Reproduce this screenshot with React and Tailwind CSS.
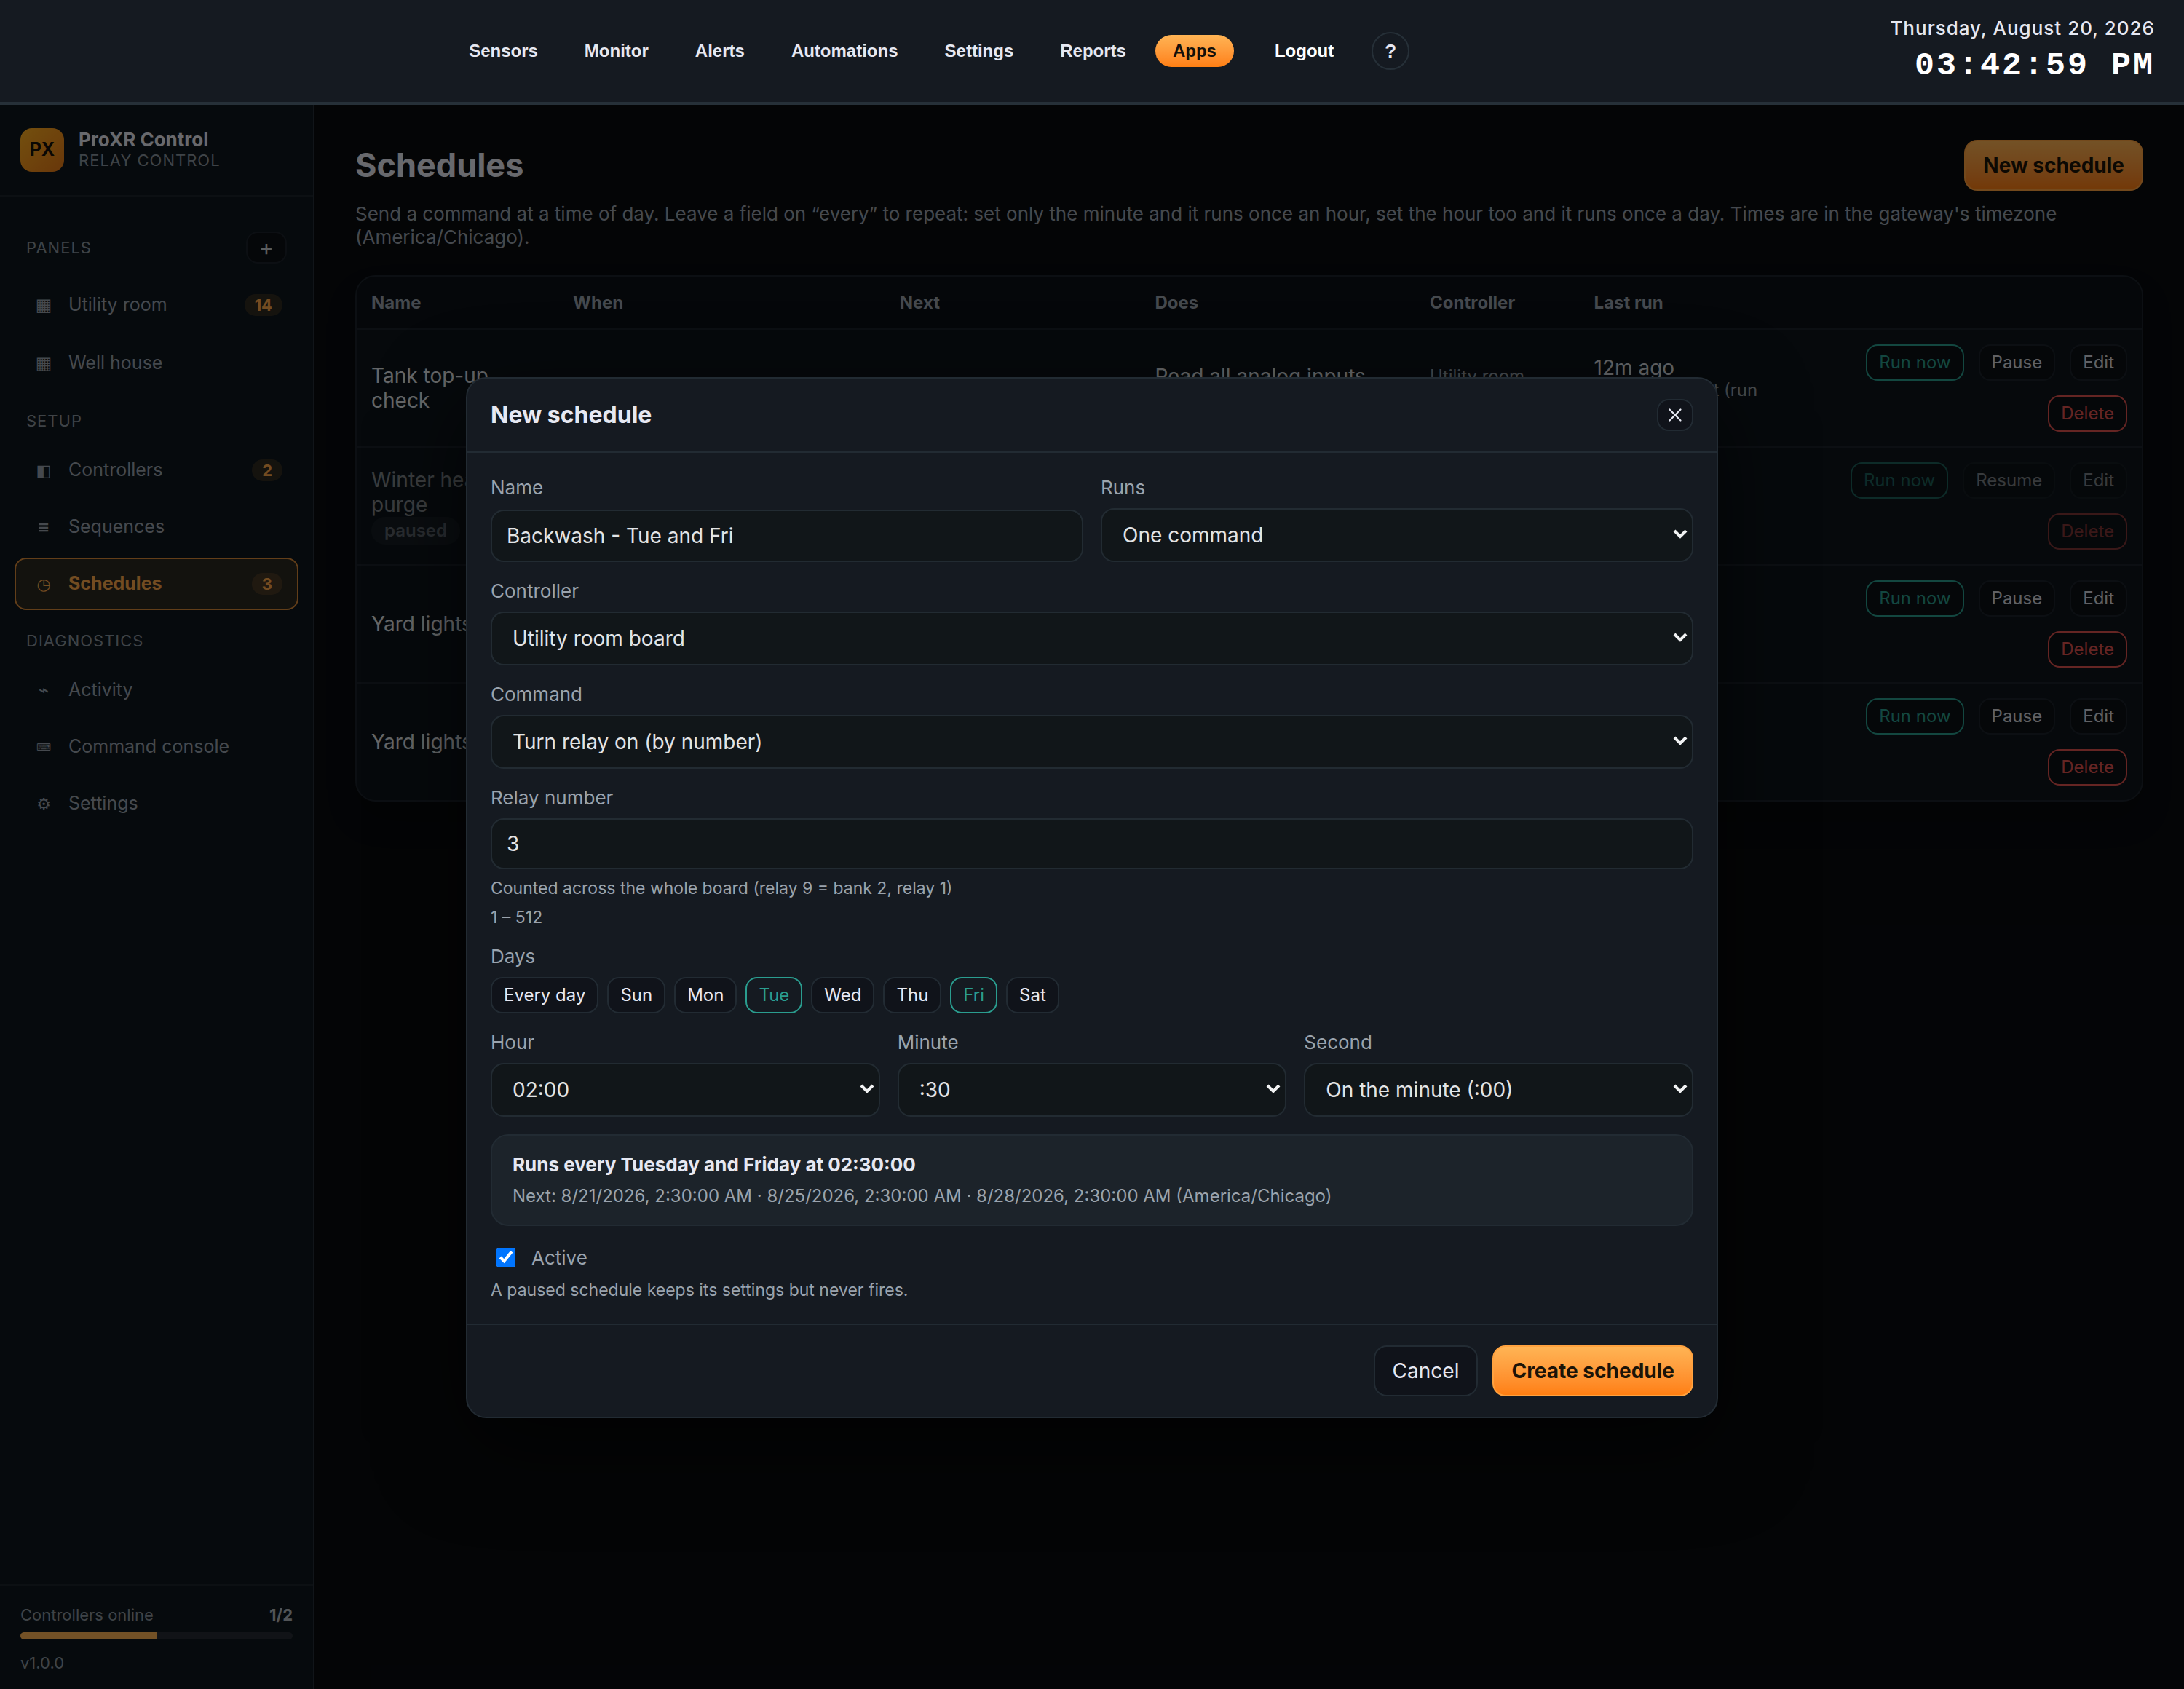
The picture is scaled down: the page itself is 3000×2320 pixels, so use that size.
import { useState } from 'react'
import { X } from 'lucide-react'

const topLinks = ['Sensors', 'Monitor', 'Alerts', 'Automations', 'Settings', 'Reports', 'Apps']

const panels = [
  { icon: '▦', iconClass: 'text-2xl', label: 'Utility room', count: 14 },
  { icon: '▦', iconClass: 'text-2xl', label: 'Well house' },
]

const setup = [
  { icon: '◧', iconClass: 'text-[22px]', label: 'Controllers', count: 2 },
  { icon: '≡', iconClass: 'text-xl font-bold', label: 'Sequences' },
  { icon: '◷', iconClass: 'text-[22px]', label: 'Schedules', count: 3, active: true },
]

const diagnostics = [
  { icon: '⌁', iconClass: 'text-2xl font-bold', label: 'Activity' },
  { icon: '⌨', iconClass: 'text-sm', label: 'Command console' },
  { icon: '⚙', iconClass: 'text-[22px]', label: 'Settings' },
]

const schedules = [
  {
    name: 'Tank top-up check',
    when: 'Every hour at :30',
    next: 'in 47 minutes',
    does: 'Read all analog inputs',
    controller: 'Utility room board',
    last: '12m ago',
    result: 'Command sent (run manually)',
  },
  {
    name: 'Winter header purge',
    paused: true,
    when: 'Every day at 04:00:00',
    next: '—',
    does: 'Purge sequence',
    controller: 'Well house',
    last: 'never',
  },
  {
    name: 'Yard lights off',
    when: 'Every day at 23:00:00',
    next: 'in 7 hours',
    does: 'Turn relay off',
    controller: 'Utility room',
    last: '16h ago',
  },
  {
    name: 'Yard lights on',
    when: 'Every day at 20:00:00',
    next: 'in 4 hours',
    does: 'Turn relay on',
    controller: 'Utility room',
    last: '19h ago',
  },
]

const days = ['Every day', 'Sun', 'Mon', 'Tue', 'Wed', 'Thu', 'Fri', 'Sat']

function TopBar() {
  return (
    <header className="flex items-center gap-10 h-36 pr-10 bg-[#151a21] border-b-4 border-[#263038]">
      <nav className="flex-1 flex items-center justify-center gap-4 font-['Liberation_Sans',Arial,sans-serif] text-2xl font-bold">
        {topLinks.map((label) => (
          <a
            key={label}
            href="#"
            className={
              label === 'Apps'
                ? 'h-11 px-6 flex items-center rounded-full bg-linear-to-b from-[#ffb454] to-[#ff7f11] text-[#14100a]'
                : 'h-11 px-6 flex items-center text-[#e6e8f2]'
            }
          >
            {label}
          </a>
        ))}
        <a href="#" className="h-11 px-6 ml-4 flex items-center text-white">Logout</a>
        <button className="size-13 ml-3 rounded-full border-2 border-[#263038] text-[26px] text-[#e6e8f2]">?</button>
      </nav>
      <div className="flex flex-col gap-2.5 text-right">
        <div className="text-[26px] leading-8 font-medium tracking-[1px] text-[#e6e8f2]">Thursday, August 20, 2026</div>
        <div className="font-['Courier_New',Courier,monospace] text-[45px] leading-[52px] font-bold tracking-[3px] text-white">
          03:42:59 PM
        </div>
      </div>
    </header>
  )
}

function NavItem({ item, tall }) {
  return (
    <a
      href="#"
      className={`flex items-center gap-4 px-5 rounded-2xl border-2 text-[25px] ${tall ? 'h-[74px]' : 'h-[72px]'} ${
        item.active
          ? 'bg-[#ffa23f]/12 border-[#d98a38] text-[#ffa94a] font-bold'
          : 'border-transparent text-[#9aa3ad]'
      }`}
    >
      <span className={`w-9 text-center font-['DejaVu_Sans',sans-serif] ${item.active ? 'font-normal' : ''} ${item.iconClass}`}>
        {item.icon}
      </span>
      <span className="flex-1">{item.label}</span>
      {item.count && (
        <span className="h-[30px] px-[14px] flex items-center rounded-full bg-[#ffa23f]/14 text-[22px] font-bold text-[#ffa94a]">
          {item.count}
        </span>
      )}
    </a>
  )
}

function Sidebar() {
  return (
    <aside className="w-[432px] shrink-0 flex flex-col bg-[#0e171d] border-r-2 border-[#263038]">
      <div className="h-[126px] px-7 flex items-center gap-5 border-b-2 border-[#1c252c]">
        <div className="size-[60px] rounded-2xl flex items-center justify-center bg-linear-to-br from-[#ffb020] to-[#e87a18] text-[#14100a] text-[25px] font-bold">
          PX
        </div>
        <div>
          <div className="text-[26px] leading-7 font-bold text-[#e6e8f2]">ProXR Control</div>
          <div className="text-[22px] leading-7 tracking-[1px] text-[#8b949e]">RELAY CONTROL</div>
        </div>
      </div>
      <nav className="flex-1 px-5 pt-12">
        <div className="pl-4 pr-4 mb-5 flex items-center justify-between">
          <span className="text-[22px] tracking-[1px] text-[#8b949e]">PANELS</span>
          <button aria-label="Add panel" className="w-14 h-11 rounded-2xl border-2 border-[#1c232b] bg-[#0d1016] text-[30px] leading-8 text-[#c9ced4]">
            +
          </button>
        </div>
        <div className="flex flex-col gap-[6px]">
          {panels.map((item) => <NavItem key={item.label} item={item} tall />)}
        </div>
        <div className="pl-4 pt-[26px] pb-4 text-[22px] leading-8 tracking-[1px] text-[#8b949e]">SETUP</div>
        <div className="flex flex-col gap-[6px]">
          {setup.map((item) => <NavItem key={item.label} item={item} />)}
        </div>
        <div className="pl-4 pt-[26px] pb-4 text-[22px] leading-8 tracking-[1px] text-[#8b949e]">DIAGNOSTICS</div>
        <div className="flex flex-col gap-[6px]">
          {diagnostics.map((item) => <NavItem key={item.label} item={item} />)}
        </div>
      </nav>
      <div className="px-7 pt-6 pb-5 border-t-2 border-[#1c252c] text-[22px] leading-8 text-[#8b949e]">
        <div className="flex justify-between">
          <span>Controllers online</span>
          <span className="font-bold text-[#b4bac1]">1/2</span>
        </div>
        <div className="h-[10px] my-2 rounded-full bg-[#262c33] overflow-hidden">
          <div className="h-full w-1/2 bg-[#ffb454]" />
        </div>
        <div className="mt-4">v1.0.0</div>
      </div>
    </aside>
  )
}

function SmallButton({ tone, children }) {
  const tones = {
    plain: 'border-[#1c232b] bg-[#0d1016] text-[#d5d8dd]',
    teal: 'border-[#2a9d8f] bg-[#0d1016] text-[#2a9d8f]',
    red: 'border-[#e0524f] bg-[#0d1016] text-[#e0524f]',
  }
  return <button className={`h-[50px] px-4 rounded-2xl border-2 text-2xl ${tones[tone]}`}>{children}</button>
}

function ScheduleTable() {
  return (
    <div className="mt-9 rounded-[28px] border-2 border-[#1c232b] bg-[#0e161b] overflow-hidden shadow-2xl">
      <table className="w-full table-fixed text-left text-[28px] leading-[34px] text-[#dfe2e6]">
        <thead>
          <tr className="h-[72px] border-b-2 border-[#1c232b] bg-[#0d1117] text-2xl text-[#9aa3ad]">
            <th className="w-[11.3%] px-5 font-bold">Name</th>
            <th className="w-[18.3%] px-5 font-bold">When</th>
            <th className="w-[14.3%] px-5 font-bold">Next</th>
            <th className="w-[15.4%] px-5 font-bold">Does</th>
            <th className="w-[9.2%] px-5 font-bold">Controller</th>
            <th className="w-[13.3%] px-5 font-bold">Last run</th>
            <th />
          </tr>
        </thead>
        <tbody>
          {schedules.map((s) => (
            <tr key={s.name} className="h-[162px] border-b-2 border-[#1c232b] last:h-40 last:border-0">
              <td className={`px-5 ${s.paused ? 'opacity-55' : ''}`}>
                {s.name}
                {s.paused && (
                  <div>
                    <span className="inline-flex h-[38px] px-[18px] items-center rounded-full bg-[#1f262d] text-2xl font-semibold text-[#9aa3ad]">
                      paused
                    </span>
                  </div>
                )}
              </td>
              <td className="px-5">{s.when}</td>
              <td className="px-5">{s.next}</td>
              <td className="px-5">
                {s.does}
                <div className="text-2xl text-[#9aa3ad]">one command</div>
              </td>
              <td className="px-5 text-2xl text-[#9aa3ad]">{s.controller}</td>
              <td className="px-5">
                {s.last}
                {s.result && <div className="text-2xl leading-7 text-[#9aa3ad]">{s.result}</div>}
              </td>
              <td className={`px-5 py-5 ${s.paused ? 'opacity-55' : ''}`}>
                <div className="flex flex-wrap justify-end gap-5">
                  <SmallButton tone="teal">Run now</SmallButton>
                  <SmallButton tone="plain">{s.paused ? 'Resume' : 'Pause'}</SmallButton>
                  <SmallButton tone="plain">Edit</SmallButton>
                  <SmallButton tone="red">Delete</SmallButton>
                </div>
              </td>
            </tr>
          ))}
        </tbody>
      </table>
    </div>
  )
}

const fieldClass = 'w-full rounded-[18px] border-2 border-[#222b32] bg-[#111619] text-[28px] text-[#e2e4e6]'

function Label({ id, children }) {
  return <label htmlFor={id} className="block mb-3 text-[26px] leading-8 text-[#9aa3ad]">{children}</label>
}

function SelectField({ id, label, options }) {
  return (
    <div>
      <Label id={id}>{label}</Label>
      <div className="relative">
        <select id={id} className={`${fieldClass} h-[74px] pl-7 pr-14 appearance-none`}>
          {options.map((o) => <option key={o}>{o}</option>)}
        </select>
        <svg
          className="absolute right-2 top-7 w-5 h-4 pointer-events-none"
          viewBox="0 0 20 16"
          fill="none"
          stroke="#f1f2f3"
          strokeWidth="4"
        >
          <path d="M2 3l8 8 8-8" />
        </svg>
      </div>
    </div>
  )
}

function ScheduleModal() {
  const [name, setName] = useState('Backwash - Tue and Fri')
  const [relay, setRelay] = useState('3')
  const [selected, setSelected] = useState(['Tue', 'Fri'])
  const [active, setActive] = useState(true)

  const toggleDay = (day) => {
    if (day === 'Every day') return setSelected([])
    setSelected((prev) => (prev.includes(day) ? prev.filter((d) => d !== day) : [...prev, day]))
  }

  return (
    <div className="absolute inset-0 pt-[2px] flex items-center justify-center bg-black/55">
      <div
        role="dialog"
        aria-labelledby="dialog-title"
        className="w-full max-w-[1720px] rounded-[28px] border-2 border-[#222b33] bg-[#151a21] shadow-[0_40px_120px_rgba(0,0,0,0.6)]"
      >
        <div className="px-8 py-7 flex items-center justify-between border-b-2 border-[#222b33]">
          <h2 id="dialog-title" className="text-[32px] leading-10 font-bold text-[#e6e8f2]">New schedule</h2>
          <button
            aria-label="Close"
            className="w-[50px] h-11 flex items-center justify-center rounded-2xl border-2 border-[#222b33] bg-[#10131a] text-[#e6e8f2]"
          >
            <X size={30} strokeWidth={1.75} />
          </button>
        </div>

        <div className="p-8 flex flex-col gap-6">
          <div className="grid grid-cols-2 gap-6">
            <div className="flex flex-col justify-between">
              <Label id="name">Name</Label>
              <input
                id="name"
                value={name}
                onChange={(e) => setName(e.target.value)}
                className={`${fieldClass} h-[72px] px-5`}
              />
            </div>
            <SelectField id="runs" label="Runs" options={['One command', 'A sequence']} />
          </div>
          <SelectField id="controller" label="Controller" options={['Utility room board', 'Well house board']} />
          <SelectField id="command" label="Command" options={['Turn relay on (by number)', 'Turn relay off (by number)']} />
          <div>
            <Label id="relay">Relay number</Label>
            <input
              id="relay"
              value={relay}
              onChange={(e) => setRelay(e.target.value)}
              className={`${fieldClass} block h-[70px] px-5`}
            />
            <p className="mt-3 text-[23px] leading-7 text-[#9aa3ad]">
              Counted across the whole board (relay 9 = bank 2, relay 1)
            </p>
            <p className="mt-3 text-[23px] leading-7 text-[#9aa3ad]">1 – 512</p>
          </div>

          <div>
            <div className="mb-3 text-[26px] leading-8 text-[#9aa3ad]">Days</div>
            <div className="flex gap-3">
              {days.map((day) => (
                <button
                  key={day}
                  onClick={() => toggleDay(day)}
                  className={`h-[50px] px-4 rounded-2xl border-2 text-2xl ${
                    selected.includes(day)
                      ? 'border-[#2a9d8f] bg-[#151a21] text-[#2a9d8f]'
                      : 'border-[#222b33] bg-[#10131a] text-[#e6e8f2]'
                  }`}
                >
                  {day}
                </button>
              ))}
            </div>
          </div>

          <div className="grid grid-cols-3 gap-6">
            <SelectField id="hour" label="Hour" options={['02:00', '03:00']} />
            <SelectField id="minute" label="Minute" options={[':30', ':45']} />
            <SelectField id="second" label="Second" options={['On the minute (:00)', 'Every second']} />
          </div>

          <div className="px-7 py-6 rounded-[24px] border-2 border-[#222b33] bg-[#1c232a]">
            <div className="text-[26px] leading-8 font-bold text-[#e6e8f2]">Runs every Tuesday and Friday at 02:30:00</div>
            <div className="mt-3 text-2xl leading-[30px] text-[#9aa3ad]">
              Next: 8/21/2026, 2:30:00 AM · 8/25/2026, 2:30:00 AM · 8/28/2026, 2:30:00 AM (America/Chicago)
            </div>
          </div>

          <div>
            <label className="h-[38px] pl-2 flex items-center gap-[22px] text-[26px] text-[#9aa3ad]">
              <input
                type="checkbox"
                checked={active}
                onChange={(e) => setActive(e.target.checked)}
                className="size-[26px] accent-[#0075ff]"
              />
              Active
            </label>
            <p className="mt-3 text-[23px] leading-7 text-[#9aa3ad]">A paused schedule keeps its settings but never fires.</p>
          </div>
        </div>

        <div className="px-8 py-7 flex justify-end gap-5 border-t-2 border-[#222b33]">
          <button className="h-[70px] px-6 rounded-[18px] border-2 border-[#222b33] bg-[#10131a] text-[28px] text-[#e6e8f2]">
            Cancel
          </button>
          <button className="h-[70px] px-6 rounded-[18px] border-2 border-[#ffa23f] bg-linear-to-b from-[#ffb454] to-[#ff7f11] text-[28px] font-bold text-[#1c1408]">
            Create schedule
          </button>
        </div>
      </div>
    </div>
  )
}

export default function App() {
  return (
    <div className="min-h-screen flex flex-col bg-[#090c0f] font-['Inter',sans-serif]">
      <TopBar />
      <div className="relative flex-1 flex">
        <Sidebar />
        <main className="flex-1 min-w-0 px-14 pt-12">
          <div className="flex items-center justify-between">
            <h1 className="text-[45px] leading-[52px] font-bold text-[#e6e8f2]">Schedules</h1>
            <button className="h-[70px] px-6 rounded-[18px] border-2 border-[#ffa23f] bg-linear-to-b from-[#ffb454] to-[#ff7f11] text-[28px] font-bold text-[#1c1408]">
              New schedule
            </button>
          </div>
          <p className="mt-4 text-[26px] leading-8 text-[#9aa3ad]">
            Send a command at a time of day. Leave a field on “every” to repeat: set only the minute and it runs once an
            hour, set the hour too and it runs once a day. Times are in the gateway's timezone (America/Chicago).
          </p>
          <ScheduleTable />
        </main>
        <ScheduleModal />
      </div>
    </div>
  )
}
